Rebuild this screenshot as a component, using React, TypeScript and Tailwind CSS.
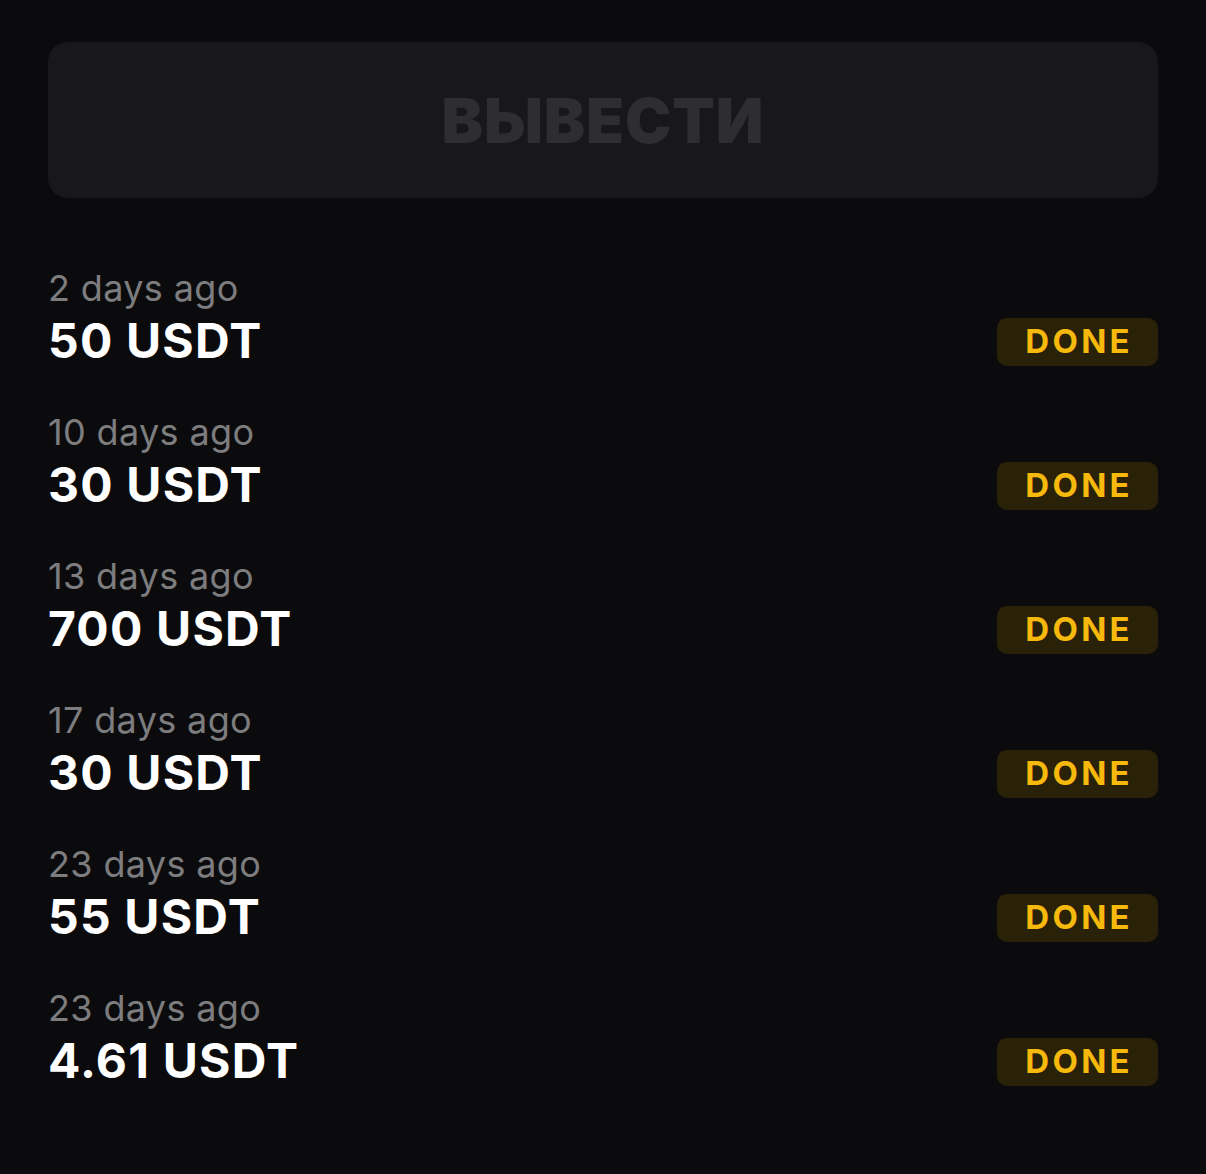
import React from 'react';

const items = [
  { ago: '2 days ago', amount: '50 USDT' },
  { ago: '10 days ago', amount: '30 USDT' },
  { ago: '13 days ago', amount: '700 USDT' },
  { ago: '17 days ago', amount: '30 USDT' },
  { ago: '23 days ago', amount: '55 USDT' },
  { ago: '23 days ago', amount: '4.61 USDT' },
];

export default function App() {
  return (
    <div className="min-h-[1174px] w-full bg-[#0b0b0d] px-12 pt-[42px] font-['Inter',sans-serif]">
      <button className="flex h-[156px] w-full items-center justify-center rounded-[20px] bg-[#18181a]">
        <span className="text-[62px] font-black tracking-[0.015em] text-[#2e2e30]">ВЫВЕСТИ</span>
      </button>

      <div className="mt-[68px] flex flex-col gap-[41px]">
        {items.map((it, i) => (
          <div key={i} className="flex items-end justify-between">
            <div className="flex flex-col">
              <span className="text-[36px] leading-[44px] font-normal tracking-[0.01em] text-[#7d7d7f]">{it.ago}</span>
              <span className="mt-[3px] text-[48px] leading-[56px] font-bold tracking-[0.025em] text-white">{it.amount}</span>
            </div>
            <div className="mb-[3px] flex h-[48px] w-[161px] items-center justify-center rounded-[10px] bg-[#2a2109]">
              <span className="pl-[0.1em] text-[33px] font-bold tracking-[0.1em] text-[#f7b90c]">DONE</span>
            </div>
          </div>
        ))}
      </div>
    </div>
  );
}
